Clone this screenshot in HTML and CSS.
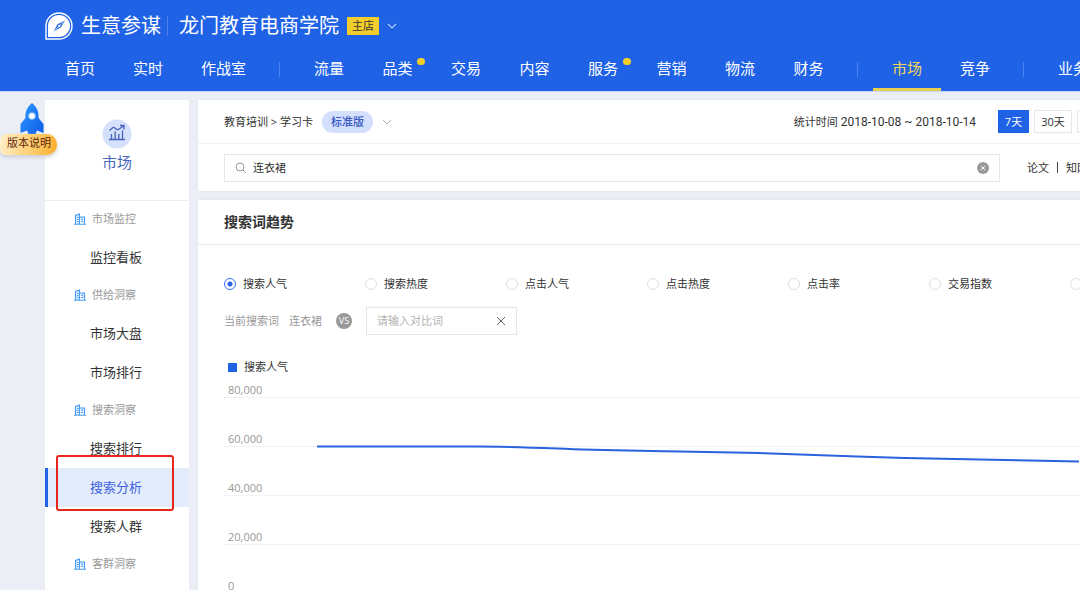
FILE: index.html
```html
<!DOCTYPE html>
<html lang="zh-CN">

<head>
    <meta charset="UTF-8">
    <meta name="viewport" content="width=device-width, initial-scale=1.0">
    <title>生意参谋 - 搜索分析</title>
    <link rel="stylesheet" href="styles.css">
</head>

<body>
    <header>
        <div class="brand">
            <svg class="logo" viewBox="0 0 28 28" width="28" height="28">
                <path d="M1 27V14A13 13 0 1 1 14 27Z" fill="none" stroke="#fff" stroke-width="1.4" />
                <path d="M3 25V14A11 11 0 1 1 14 25Z" fill="#fff" />
                <path d="M20 8.500L15.700 15.600L8.500 19.500L12.500 12.300Z" fill="#1f62e6" />
                <path d="M9.500 18.600L18.500 9.700" stroke="#fff" stroke-width=".7" />
                <circle cx="14.200" cy="14" r="1.200" fill="#fff" />
            </svg>
            <span class="name">生意参谋</span>
            <h1>龙门教育电商学院</h1>
            <span class="tag">主店</span>
            <svg class="arrow" viewBox="0 0 10 6" width="10" height="6">
                <path d="M1 1l4 4 4-4" fill="none" stroke="currentColor" stroke-width="1.200" />
            </svg>
        </div>

        <nav>
            <div class="group">
                <a href="#">首页</a>
                <a href="#">实时</a>
                <a href="#">作战室</a>
            </div>
            <div class="group group-shop">
                <a href="#">流量</a>
                <a href="#" class="new">品类</a>
                <a href="#">交易</a>
                <a href="#">内容</a>
                <a href="#" class="new">服务</a>
                <a href="#">营销</a>
                <a href="#">物流</a>
                <a href="#">财务</a>
            </div>
            <div class="group">
                <a href="#" class="active">市场</a>
                <a href="#">竞争</a>
            </div>
            <div class="group">
                <a href="#">业务专区</a>
            </div>
        </nav>
    </header>

    <!-- ícone de prédio usado nos títulos do menu -->
    <svg width="0" height="0" class="defs">
        <symbol id="building" viewBox="0 0 12 12">
            <path d="M1.500 11V2.500L5.500 1V11M5.500 4H10.500V11M0 11.200H12" fill="#d6ebff" stroke="#4a9cf5" stroke-width="1.100" />
            <path d="M3 4.500h1.500M3 6.500h1.500M3 8.500h1.500M7 6.200h2M7 8.500h2" stroke="#4a9cf5" />
        </symbol>
    </svg>

    <div class="page">
        <a href="#" class="version">
            <svg viewBox="0 0 24 31" width="24" height="31">
                <defs>
                    <linearGradient id="rocket" x1="0" y1="0" x2="1" y2="1">
                        <stop offset="0" stop-color="#2f9bff" />
                        <stop offset="1" stop-color="#0d5ce8" />
                    </linearGradient>
                </defs>
                <path d="M12 0C17 4 19 9 18.500 15L23.500 21V30L17 27.500L15.500 31H8.500L7 27.500L0.500 30V21L5.500 15C5 9 7 4 12 0Z" fill="url(#rocket)" />
                <circle cx="12" cy="13" r="3.800" fill="#8cc4ff" />
                <circle cx="12" cy="13" r="2.700" fill="#fff" />
            </svg>
            <span>版本说明</span>
        </a>

        <aside>
            <div class="section-title">
                <svg viewBox="0 0 30 30" width="30" height="30">
                    <circle cx="15" cy="15" r="14.500" fill="#d5e1fc" />
                    <path d="M7 20.500H23M9.500 20V15M13.200 20V12.500M16.800 20V15M20.500 20V11.500M7.500 11.500L11 8.500C13 7.500 14 11.500 16.500 10.500L21.500 7M18 6.500H22V10.500" fill="none" stroke="#4561b8" stroke-width="1.300" />
                </svg>
                <h2>市场</h2>
            </div>
            <h3><svg width="12" height="12"><use href="#building" /></svg>市场监控</h3>
            <a href="#">监控看板</a>
            <h3><svg width="12" height="12"><use href="#building" /></svg>供给洞察</h3>
            <a href="#">市场大盘</a>
            <a href="#">市场排行</a>
            <h3><svg width="12" height="12"><use href="#building" /></svg>搜索洞察</h3>
            <a href="#">搜索排行</a>
            <a href="#" class="active">搜索分析<span class="mark"></span></a>
            <a href="#">搜索人群</a>
            <h3><svg width="12" height="12"><use href="#building" /></svg>客群洞察</h3>
        </aside>

        <main>
            <section>
                <div class="toolbar">
                    <span>教育培训 &gt; 学习卡</span>
                    <button class="edition">标准版</button>
                    <svg class="arrow" viewBox="0 0 10 6" width="10" height="6">
                        <path d="M1 1l4 4 4-4" fill="none" stroke="currentColor" />
                    </svg>
                    <div class="period">统计时间 <span class="date">2018-10-08 ~ 2018-10-14</span></div>
                    <div class="range">
                        <button class="selected">7天</button>
                        <button>30天</button>
                        <button>日</button>
                    </div>
                </div>
                <div class="search-row">
                    <div class="search">
                        <svg viewBox="0 0 12 12" width="12" height="12">
                            <circle cx="5" cy="5" r="4" fill="none" stroke="#999" />
                            <path d="M8 8l3 3" stroke="#999" />
                        </svg>
                        <input type="text" id="palavra" value="连衣裙" aria-label="搜索词">
                        <button aria-label="清除">
                            <svg viewBox="0 0 12 12" width="12" height="12">
                                <circle cx="6" cy="6" r="6" fill="#999" />
                                <path d="M4 4l4 4M8 4l-4 4" stroke="#fff" />
                            </svg>
                        </button>
                    </div>
                    <div class="related"><a href="#">论文</a><i></i><a href="#">知网</a></div>
                </div>
            </section>

            <section class="trend">
                <h2>搜索词趋势</h2>
                <div class="metrics">
                    <label><input type="radio" name="metric" checked>搜索人气</label>
                    <label><input type="radio" name="metric">搜索热度</label>
                    <label><input type="radio" name="metric">点击人气</label>
                    <label><input type="radio" name="metric">点击热度</label>
                    <label><input type="radio" name="metric">点击率</label>
                    <label><input type="radio" name="metric">交易指数</label>
                    <label><input type="radio" name="metric">支付转化率</label>
                </div>
                <div class="compare">
                    <span>当前搜索词</span>
                    <span>连衣裙</span>
                    <b>VS</b>
                    <div class="field">
                        <input type="text" placeholder="请输入对比词" aria-label="对比词">
                        <button aria-label="关闭">
                            <svg viewBox="0 0 10 10" width="10" height="10">
                                <path d="M1 1l8 8M9 1l-8 8" stroke="#666" />
                            </svg>
                        </button>
                    </div>
                </div>
                <div class="legend">搜索人气</div>
                <div class="chart">
                    <div class="tick">80,000</div>
                    <div class="tick">60,000</div>
                    <div class="tick">40,000</div>
                    <div class="tick">20,000</div>
                    <div class="tick">0</div>
                    <svg class="line" viewBox="0 0 762 20" preserveAspectRatio="none">
                        <path d="M0 2.500H157C190 2.500 215 3.500 240 4.500C285 6.500 320 6.500 362 7.500C405 8.500 425 8.500 447 9.200C500 11 540 12.500 587 14C650 15.500 710 16.500 761 17.500" fill="none" stroke="#2b62de" stroke-width="2" />
                    </svg>
                </div>
            </section>
        </main>
    </div>
</body>

</html>
```
FILE: styles.css
```css
* {
    box-sizing: border-box;
}

body {
    font-family: "Open Sans", "Noto Sans CJK SC", sans-serif;
    font-size: 11px;
    line-height: 16px;
    color: #333;
    background-color: #ebeff5;
    margin: 0;
    overflow: hidden;
}

h1, h2, h3 {
    margin: 0;
    font-weight: normal;
}

a {
    color: inherit;
    text-decoration: none;
}

button, input {
    font: inherit;
    color: inherit;
    margin: 0;
    padding: 0;
    border: 0;
    background: none;
    outline: none;
}

svg {
    display: block;
    flex: none;
}

.defs {
    position: absolute;
}

header {
    background-color: #1f62e6;
    color: #fff;
    padding-left: 45px;
    border-bottom: 1px solid #c5d6f6;
}

.brand {
    display: flex;
    align-items: center;
    height: 48px;
    padding-top: 3px;
}

.name {
    margin-left: 8px;
    padding-right: 6px;
    border-right: 1px solid #4c82ee;
    font-size: 20px;
    line-height: 20px;
}

h1 {
    margin-left: 11px;
    font-size: 20px;
    line-height: 28px;
}

.tag {
    margin: 0 8px;
    padding: 0 5px;
    background-color: #f2cd2b;
    color: #333;
    font-size: 11px;
    line-height: 18px;
}

.brand .arrow {
    color: #b5cbf8;
}

nav {
    display: flex;
    height: 43px;
    padding-left: 1px;
    font-size: 15px;
    line-height: 41px;
    white-space: nowrap;
}

.group {
    display: flex;
    flex: none;
}

/* divisor entre os grupos */
.group + .group::before {
    content: "";
    width: 1px;
    height: 15px;
    margin: 14px 15px 0 14px;
    background-color: #4c82ee;
}

.group-shop {
    width: 578px;
}

.group-shop a {
    flex: 1;
}

nav a {
    position: relative;
    padding: 0 19px;
}

nav .active {
    color: #f5d55a;
    border-bottom: 3px solid #e8cf4e;
}

nav .new::after {
    content: "";
    position: absolute;
    top: 10px;
    right: 7px;
    width: 8px;
    height: 7px;
    border-radius: 4px;
    background-color: #f5cf27;
}

.page {
    position: relative;
    display: flex;
    gap: 9px;
    padding: 8px 0 0 45px;
}

.version {
    position: absolute;
    left: 0;
    top: 11px;
    width: 57px;
    color: #5c2710;
}

.version svg {
    margin-left: 20px;
}

.version span {
    display: block;
    position: relative;
    padding: 0 7px 3px;
    line-height: 18px;
    white-space: nowrap;
    border-radius: 6px 10px 10px 6px;
    background: linear-gradient(100deg, #fff0cc, #ffd27a 50%, #fbae2c);
    box-shadow: 0 2px 4px #c8ccd4;
}

aside {
    flex: none;
    width: 144px;
    min-height: 100vh;
    background-color: #fff;
}

.section-title {
    display: flex;
    flex-direction: column;
    align-items: center;
    height: 101px;
    padding-top: 19px;
    border-bottom: 1px solid #eaedf1;
}

.section-title h2 {
    margin-top: 1px;
    font-size: 15px;
    line-height: 24px;
    color: #4a68bd;
}

aside h3 {
    display: flex;
    align-items: center;
    gap: 6px;
    height: 37px;
    padding: 0 0 2px 29px;
    font-size: 11px;
    color: #999;
}

aside a {
    display: block;
    position: relative;
    padding-left: 45px;
    font-size: 13px;
    line-height: 39px;
}

aside .active {
    padding-left: 42px;
    border-left: 3px solid #1f62e6;
    background-color: #e3ecfb;
    color: #3d62e0;
}

.mark {
    position: absolute;
    left: 8px;
    top: -13px;
    width: 118px;
    height: 56px;
    border: 2px solid #e8271c;
    border-radius: 3px;
}

main {
    flex: 1;
    min-width: 0;
}

section {
    padding-left: 26px;
    margin-bottom: 9px;
    background-color: #fff;
    overflow: hidden;
    box-shadow: 0 0 2px #d9dee6;
}

.toolbar {
    display: flex;
    align-items: center;
    height: 44px;
    margin-left: -26px;
    padding-left: 26px;
    border-bottom: 1px solid #eff1f4;
    white-space: nowrap;
}

.edition {
    margin: 0 9px;
    padding: 0 9px;
    border-radius: 11px;
    background-color: #d3dffc;
    color: #3358c4;
    font-weight: 500;
    line-height: 22px;
}

.toolbar .arrow {
    color: #aab2be;
}

.period {
    margin-left: auto;
}

.date {
    font-family: Roboto, sans-serif;
    font-size: 12px;
}

.range {
    display: flex;
    gap: 5px;
    width: 82px;
    margin-left: 22px;
    overflow: hidden;
}

.range button {
    flex: none;
    width: 38px;
    height: 23px;
    border: 1px solid #e4e6ea;
}

.range .selected {
    width: 31px;
    border-color: #1f62e6;
    background-color: #1f62e6;
    color: #fff;
}

.search-row {
    display: flex;
    align-items: center;
    height: 47px;
}

.search {
    display: flex;
    align-items: center;
    flex: 1;
    gap: 6px;
    height: 28px;
    padding: 0 10px;
    border: 1px solid #e4e6ea;
}

.search input {
    flex: 1;
}

.related {
    display: flex;
    align-items: center;
    width: 80px;
    padding-left: 27px;
    white-space: nowrap;
}

.related i {
    flex: none;
    width: 1px;
    height: 11px;
    margin: 0 8px;
    background-color: #444;
}

.trend h2 {
    margin-left: -26px;
    padding-left: 26px;
    border-bottom: 1px solid #e6e8ec;
    font-size: 14px;
    font-weight: bold;
    line-height: 44px;
}

.metrics {
    display: flex;
    height: 16px;
    margin-top: 31px;
}

.metrics label {
    display: flex;
    align-items: center;
    flex: none;
    gap: 7px;
    width: 141px;
}

.metrics input {
    appearance: none;
    width: 12px;
    height: 12px;
    border: 1px solid #dcdfe4;
    border-radius: 50%;
}

.metrics input:checked {
    border-color: #3c6df0;
    background: radial-gradient(circle, #2b5fe3 2px, #fff 3px);
}

.compare {
    display: flex;
    align-items: center;
    gap: 10px;
    margin-top: 15px;
    color: #999;
}

.compare b {
    width: 16px;
    margin: 0 4px;
    border-radius: 50%;
    background-color: #999;
    color: #fff;
    font-size: 9px;
    font-weight: normal;
    text-align: center;
}

.field {
    display: flex;
    align-items: center;
    width: 151px;
    height: 28px;
    padding: 0 10px;
    border: 1px solid #e4e6ea;
}

.field input {
    flex: 1;
    min-width: 0;
}

.field input::placeholder {
    color: #b3b3b3;
}

.legend {
    display: flex;
    align-items: center;
    gap: 7px;
    margin: 24px 0 6px 4px;
}

.legend::before {
    content: "";
    width: 9px;
    height: 9px;
    background-color: #1f62e6;
}

.chart {
    position: relative;
    margin-top: -32px;
    color: #999;
}

.tick {
    height: 49px;
    padding: 33px 0 0 4px;
    line-height: 15px;
    border-bottom: 1px solid #f1f2f4;
}

.line {
    position: absolute;
    left: 93px;
    top: 95px;
    width: calc(100% - 93px);
    height: 20px;
}
```
